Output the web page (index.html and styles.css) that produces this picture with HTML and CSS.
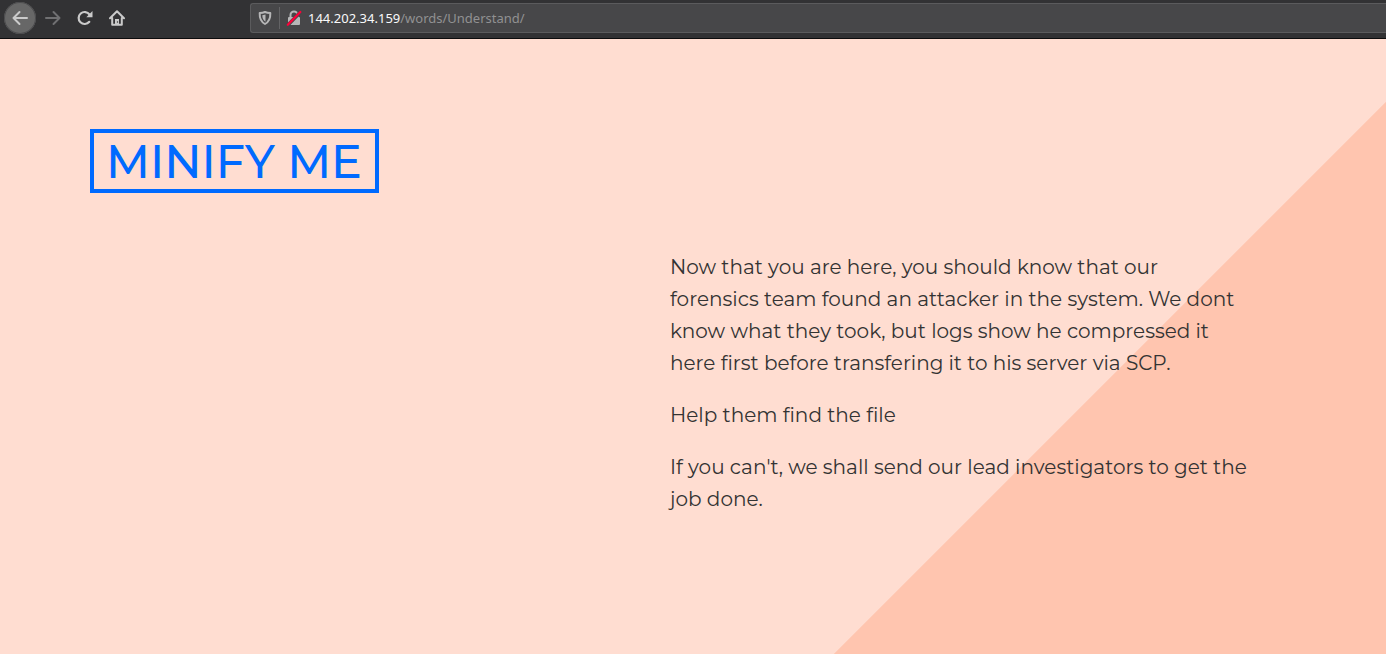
FILE: index.html
```html
<!DOCTYPE html>
<html lang="en">
<head>
<meta charset="utf-8">
<meta name="viewport" content="width=device-width, initial-scale=1">
<title>Minify Me</title>
<link rel="stylesheet" href="styles.css">
</head>
<body>
<header class="toolbar">
  <nav class="nav-buttons" aria-label="Browser navigation">
    <button class="nav-button nav-button-back" type="button" aria-label="Back">
      <svg viewBox="0 0 16 16" fill="none" stroke="currentColor" stroke-width="2" stroke-linecap="round" stroke-linejoin="round"><path d="M15 8H1.500M7.500 2 1.500 8l6 6"/></svg>
    </button>
    <button class="nav-button nav-button-disabled" type="button" aria-label="Forward" disabled>
      <svg viewBox="0 0 16 16" fill="none" stroke="currentColor" stroke-width="2" stroke-linecap="round" stroke-linejoin="round"><path d="M1 8h13.500M8.500 2l6 6-6 6"/></svg>
    </button>
    <button class="nav-button" type="button" aria-label="Reload">
      <svg viewBox="0 0 16 16"><path d="M12.300 11.800A6 6 0 1 1 12.500 4.500" fill="none" stroke="currentColor" stroke-width="2.200" stroke-linecap="round"/><path d="M15.500 1v6.200H9.300z" fill="currentColor"/></svg>
    </button>
    <button class="nav-button" type="button" aria-label="Home">
      <svg viewBox="0 0 16 16" fill="none" stroke="currentColor" stroke-width="2" stroke-linecap="round" stroke-linejoin="round"><path d="M1 8.300 8 1.300l7 7M3.200 8v6.800h9.600V8"/><path d="M6 15V9h4v6z" fill="currentColor" stroke="none"/><circle cx="8.500" cy="12" r=".7" fill="#323234" stroke="none"/></svg>
    </button>
  </nav>
  <form class="address-bar">
    <svg class="shield" viewBox="0 0 16 16"><path d="M8 2c2 .8 3.800 1 5.300 1.100C13.600 9 11.500 12 8 14 4.500 12 2.400 9 2.700 3.100 4.200 3 6 2.800 8 2z" fill="none" stroke="currentColor" stroke-width="2" stroke-linejoin="round"/><path d="M8.500 4.500v7.300C6.200 10.300 5.300 8 5.300 5.200z" fill="currentColor"/></svg>
    <span class="divider"></span>
    <svg class="lock" viewBox="0 0 16 16"><path d="M4.500 8V5a3.500 3.500 0 0 1 7 0v3" fill="none" stroke="currentColor" stroke-width="2"/><rect x="2" y="7" width="12" height="8" rx="1" fill="currentColor"/><path d="M1.500 15.500 14.500 2" stroke="#474749" stroke-width="3.500"/><path d="M1.800 14.800 14.300 2" stroke="#ff0039" stroke-width="2.200" stroke-linecap="round"/></svg>
    <a class="url" href="#"><span class="host">144.202.34.159</span>/words/Understand/</a>
  </form>
</header>
<main class="page">
  <h1 class="title">MINIFY ME</h1>
  <article class="message">
    <p>Now that you are here, you should know that our forensics team found an attacker in the system. We dont know what they took, but logs show he compressed it here first before transfering it to his server via SCP.</p>
    <p>Help them find the file</p>
    <p>If you can't, we shall send our lead investigators to get the job done.</p>
  </article>
</main>
</body>
</html>
```
FILE: styles.css
```css
* {
  box-sizing: border-box;
}

body {
  display: flex;
  flex-direction: column;
  min-height: 100vh;
  margin: 0;
  font-family: Montserrat, Inter, sans-serif;
  font-variant-ligatures: none;
  color: #333;
}

.toolbar {
  display: flex;
  align-items: center;
  gap: 117px;
  padding: 2px 0 4px 4px;
  background: #323234;
  border-bottom: 1px solid #0c0c0d;
}

.nav-buttons {
  display: flex;
}

.nav-button {
  display: grid;
  place-items: center;
  width: 32px;
  height: 32px;
  padding: 0;
  border: 0;
  border-radius: 50%;
  background: none;
  color: #cacaca;
}

.nav-button svg {
  width: 16px;
  height: 16px;
}

.nav-button-back {
  margin-right: 1px;
  background: #676767;
  box-shadow: inset 0 0 0 1px #4c4c4e;
}

.nav-button-disabled {
  color: #707072;
}

.address-bar {
  display: flex;
  flex: 1;
  align-items: center;
  height: 30px;
  padding-left: 6px;
  border: 1px solid #5b5b5d;
  border-right: 0;
  border-radius: 3px 0 0 3px;
  background: #474749;
  color: #b6b6b7;
}

.shield,
.lock {
  width: 16px;
  height: 16px;
}

.divider {
  width: 1px;
  height: 22px;
  margin: 0 6px;
  background: #636365;
}

.url {
  margin-left: 6px;
  font: 13px/20px "Noto Sans", sans-serif;
  color: #919192;
  text-decoration: none;
}

.host {
  color: #f9f9fa;
}

.page {
  flex: 1;
  padding: 90px;
  background: linear-gradient(315deg, #ffc5af 390px, #ffddd1 391px);
}

.title {
  width: fit-content;
  margin: 0 0 58px;
  padding: 2px 13px 0 12px;
  border: 4px solid #006aff;
  font-size: 46px;
  font-weight: 500;
  line-height: 54px;
  color: #006aff;
}

.message {
  max-width: 580px;
  margin-left: 580px;
  font-size: 20px;
  font-weight: 400;
  line-height: 32px;
}

.message p {
  margin: 0 0 20px;
}
```
